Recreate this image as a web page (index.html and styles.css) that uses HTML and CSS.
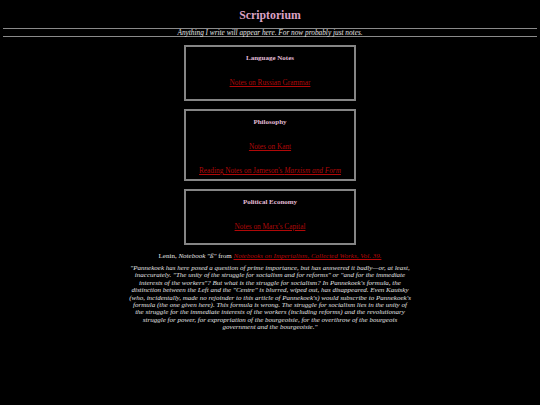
FILE: index.html
```html
<!DOCTYPE html>
<html>
<head>
<meta charset="utf-8">
<link rel="stylesheet" href="styles.css">
</head>
<body>
<header class="masthead">
  <h1 class="title">Scriptorium</h1>
  <div class="rule"></div>
  <p class="tagline">Anything I write will appear here. For now probably just notes.</p>
  <div class="rule"></div>
</header>
<main class="sections">
  <section class="box">
    <h2 class="box-title">Language Notes</h2>
    <a class="box-link" href="#">Notes on Russian Grammar</a>
  </section>
  <section class="box box-tight">
    <h2 class="box-title">Philosophy</h2>
    <a class="box-link" href="#">Notes on Kant</a>
    <a class="box-link" href="#">Reading Notes on Jameson's <i>Marxism and Form</i></a>
  </section>
  <section class="box">
    <h2 class="box-title">Political Economy</h2>
    <a class="box-link" href="#">Notes on Marx's Capital</a>
  </section>
</main>
<footer class="epigraph">
  <p class="source">Lenin, <i>Notebook "ß"</i> from <a class="source-link" href="#"><i>Notebooks on Imperialism, Collected Works, Vol. 39.</i></a></p>
  <p class="quote">"Pannekoek has here posed a question of prime importance, but has answered it badly—or, at least, inaccurately. "The unity of the struggle for socialism and for reforms" or "and for the immediate interests of the workers"? But what is the struggle for socialism? In Pannekoek's formula, the distinction between the Left and the "Centre" is blurred, wiped out, has disappeared. Even Kautsky (who, incidentally, made no rejoinder to this article of Pannekoek's) would subscribe to Pannekoek's formula (the one given here). This formula is wrong. The struggle for socialism lies in the unity of the struggle for the immediate interests of the workers (including reforms) and the revolutionary struggle for power, for expropriation of the bourgeoisie, for the overthrow of the bourgeois government and the bourgeoisie."</p>
</footer>
</body>
</html>
```

FILE: styles.css
```css
html, body {
  margin: 0;
  padding: 0;
  background: #000;
}
body {
  padding: 0 3px;
  color: #dcdcdc;
  font-family: "Liberation Serif", "Times New Roman", serif;
  text-align: center;
}
.masthead {
  padding-top: 8px;
}
.title {
  margin: 0;
  height: 20px;
  line-height: 14px;
  font-size: 11.8px;
  font-weight: bold;
  color: #dba2c4;
}
.rule {
  height: 1px;
  background: #8a8a8a;
}
.tagline {
  margin: 0;
  height: 7px;
  line-height: 7px;
  font-size: 7.3px;
  font-style: italic;
  color: #e4e4e4;
}
.sections {
  display: flex;
  flex-direction: column;
  align-items: center;
  gap: 8px;
  padding-top: 8px;
}
.box {
  box-sizing: border-box;
  width: 172px;
  border: 2px solid #858585;
  display: flex;
  flex-direction: column;
  align-items: center;
  gap: 15px;
  padding: 6px 0 11px;
}
.box-tight {
  gap: 14.5px;
  padding-bottom: 3px;
}
.box-title {
  margin: 0;
  line-height: 10px;
  font-size: 7px;
  font-weight: bold;
  color: #e2bcd6;
}
.box-link {
  line-height: 10px;
  font-size: 7.3px;
  color: #b00808;
  text-decoration: underline;
}
.epigraph {
  padding-top: 6px;
}
.source {
  margin: 0;
  line-height: 10px;
  font-size: 7px;
  color: #e4e4e4;
}
.source-link {
  color: #b80808;
}
.quote {
  margin: 4px auto 0;
  width: 284px;
  line-height: 7.4px;
  font-size: 7px;
  font-style: italic;
  color: #e0e0e0;
}
```
